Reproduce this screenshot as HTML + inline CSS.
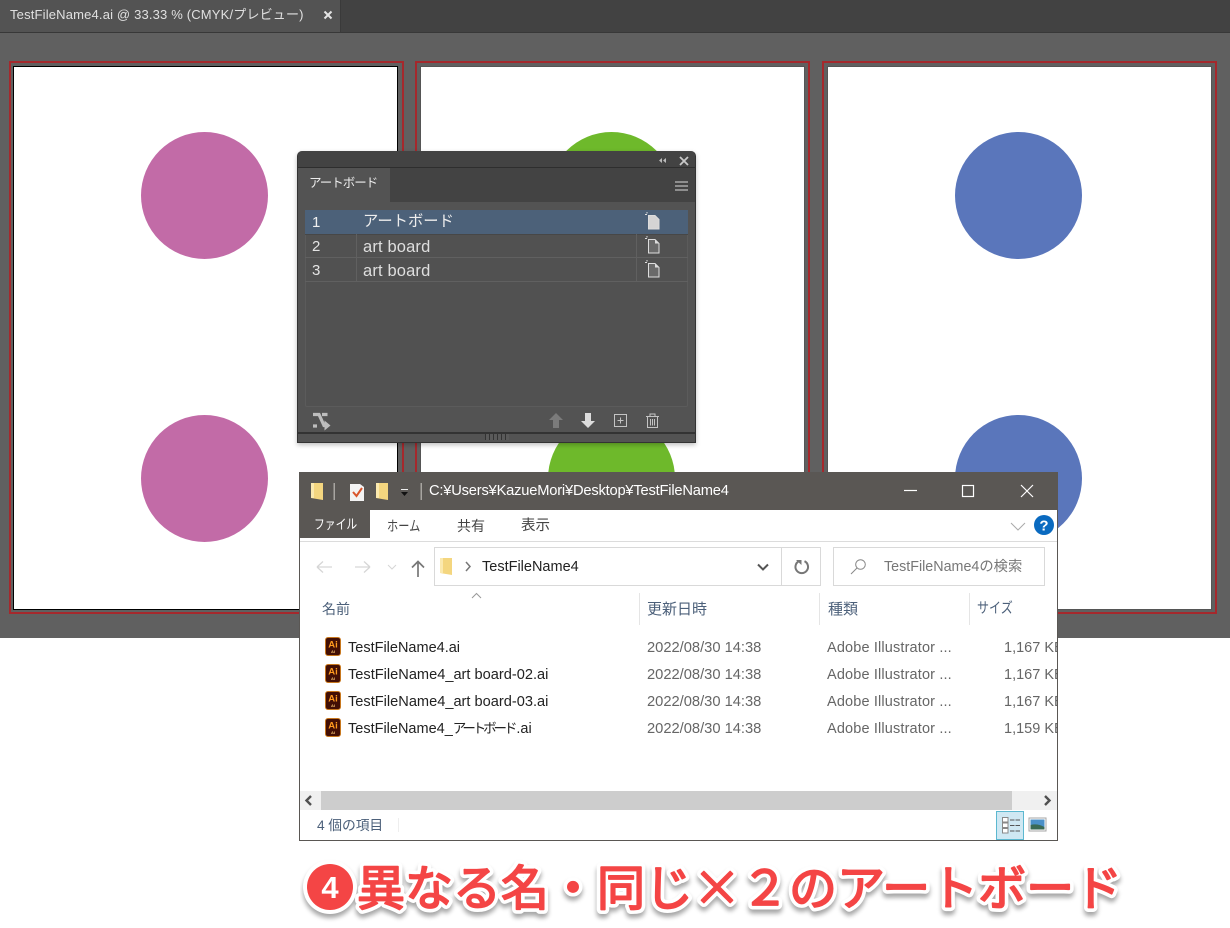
<!DOCTYPE html>
<html lang="ja"><head><meta charset="utf-8"><title>TestFileName4</title>
<style>
html,body{margin:0;padding:0;background:#fff}
body{width:1230px;height:928px;position:relative;overflow:hidden;font-family:"Liberation Sans","Noto Sans CJK JP",sans-serif}
.a{position:absolute;box-sizing:border-box}
.t{position:absolute;white-space:nowrap;line-height:1}
.c{position:absolute;width:127px;height:127px;border-radius:50%}
.red{position:absolute;border:2px solid #a5282c;box-sizing:border-box}
.ab{position:absolute;background:#fff;box-sizing:border-box}
.sx{transform:scaleX(.8);transform-origin:0 0}
svg{position:absolute;overflow:visible}
</style></head><body>
<div class="a" style="left:0;top:0;width:1230px;height:638px;background:#606060"></div>
<div class="a" style="left:0;top:0;width:1230px;height:33px;background:#424242;border-bottom:1px solid #383838"></div>
<div class="a" style="left:0;top:0;width:341px;height:33px;background:#535353;border-right:1px solid #3a3a3a;border-bottom:1px solid #383838"></div>
<div class="t" style="left:10px;top:8px;font-size:13px;color:#e0e0e0;letter-spacing:.17px">TestFileName4.ai @ 33.33 % (CMYK/プレビュー)</div>
<svg style="left:323px;top:10px" width="10" height="10"><path d="M1.500 1.500L8.500 8.500M8.500 1.500L1.500 8.500" stroke="#e4e4e4" stroke-width="2"/></svg>

<div class="red" style="left:9px;top:61px;width:395px;height:553px"></div>
<div class="red" style="left:415px;top:61px;width:395px;height:553px"></div>
<div class="red" style="left:822px;top:61px;width:395px;height:553px"></div>
<div class="ab" style="left:13px;top:66px;width:385px;height:544px;border:1px solid #000"></div>
<div class="ab" style="left:420px;top:66px;width:385px;height:544px;border:1px solid #555"></div>
<div class="ab" style="left:827px;top:66px;width:385px;height:544px;border:1px solid #555"></div>
<div class="c" style="left:141px;top:132px;background:#c26ba7"></div>
<div class="c" style="left:141px;top:415px;background:#c26ba7"></div>
<div class="c" style="left:548px;top:132px;background:#6eb92b"></div>
<div class="c" style="left:548px;top:415px;background:#6eb92b"></div>
<div class="c" style="left:955px;top:132px;background:#5a76bb"></div>
<div class="c" style="left:955px;top:415px;background:#5a76bb"></div>

<!-- Artboards panel -->
<div class="a" style="left:297px;top:151px;width:399px;height:292px;background:#535353;border:1px solid #333;border-top:0;border-radius:5px 5px 0 0;box-shadow:0 2px 5px rgba(0,0,0,.25)"></div>
<div class="a" style="left:298px;top:151px;width:397px;height:17px;background:#434343;border-radius:5px 5px 0 0;border-bottom:1px solid #2e2e2e"></div>
<svg style="left:658px;top:156px" width="32" height="10"><path d="M4 2L1 4.500L4 7ZM8 2L5 4.500L8 7Z" fill="#bbb"/><path d="M22 1L30 9M30 1L22 9" stroke="#c8c8c8" stroke-width="1.800"/></svg>
<div class="a" style="left:298px;top:168px;width:397px;height:34px;background:#434343"></div>
<div class="a" style="left:298px;top:168px;width:92px;height:35px;background:#535353"></div>
<div class="t" style="left:309px;top:177px;font-size:12.500px;color:#ececec;letter-spacing:-1px">アートボード</div>
<div class="a" style="left:675px;top:181px;width:13px;height:10px;border-top:2px solid #8e8e8e;border-bottom:2px solid #8e8e8e"></div>
<div class="a" style="left:675px;top:185px;width:13px;height:2px;background:#8e8e8e"></div>
<div class="a" style="left:305px;top:210px;width:383px;height:197px;background:#515151;border:1px solid #5b5b5b;border-radius:2px"></div>
<div class="a" style="left:305px;top:210px;width:383px;height:24px;background:#4c6179"></div>
<div class="a" style="left:305px;top:234px;width:383px;height:1px;background:#474747"></div>
<div class="a" style="left:305px;top:257px;width:383px;height:1px;background:#606060"></div>
<div class="a" style="left:305px;top:281px;width:383px;height:1px;background:#606060"></div>
<div class="a" style="left:356px;top:234px;width:1px;height:47px;background:#606060"></div>
<div class="a" style="left:636px;top:234px;width:1px;height:47px;background:#606060"></div>
<div class="t" style="left:312px;top:215px;font-size:15px;color:#f0f0f0">1</div>
<div class="t" style="left:312px;top:239px;font-size:15px;color:#e4e4e4">2</div>
<div class="t" style="left:312px;top:263px;font-size:15px;color:#e4e4e4">3</div>
<div class="t" style="left:363px;top:214px;font-size:15.300px;color:#ededed">アートボード</div>
<div class="t" style="left:363px;top:239px;font-size:16.500px;color:#dedede;letter-spacing:.15px">art board</div>
<div class="t" style="left:363px;top:263px;font-size:16.500px;color:#dedede;letter-spacing:.15px">art board</div>
<svg style="left:643px;top:212px" width="18" height="70">
<path d="M5.500 3.500H12L16 7.500V17H5.500Z" fill="#d4d4d4" stroke="#ddd"/><path d="M2 2.500H4M4 0V1.500" stroke="#ddd"/>
<g transform="translate(0,24)"><path d="M5.500 3.500H12L16 7.500V17H5.500Z" fill="#6a6a6a" stroke="#ddd"/><path d="M12 3.500V7.500H16Z" fill="#ddd"/><path d="M2 2.500H4M4 0V1.500" stroke="#ddd"/></g>
<g transform="translate(0,48)"><path d="M5.500 3.500H12L16 7.500V17H5.500Z" fill="#6a6a6a" stroke="#ddd"/><path d="M12 3.500V7.500H16Z" fill="#ddd"/><path d="M2 2.500H4M4 0V1.500" stroke="#ddd"/></g>
</svg>
<svg style="left:312px;top:412px" width="20" height="20" fill="none"><path d="M1 2.500H7L12 13.500H14M1 14H5M10 2.500H15.500" stroke="#bdbdbd" stroke-width="3.200"/><path d="M12.500 8.500L18.500 13.500L12.500 18.500Z" fill="#bdbdbd"/></svg>
<svg style="left:548px;top:412px" width="116" height="18">
<path d="M8 1L15 8H11V16H5V8H1Z" fill="#7b7b7b"/>
<path d="M37 1H43V9H47L40 16L33 9H37Z" fill="#dcdcdc"/>
<rect x="66.500" y="2.500" width="12" height="12" fill="none" stroke="#c4c4c4"/><path d="M72.500 5.500V11.500M69.500 8.500H75.500" stroke="#c4c4c4"/>
<path d="M98 4.500H111M102 4V2H107V4M99.500 5V15.500H109.500V5M102.500 7V13.500M104.500 7V13.500M106.500 7V13.500" fill="none" stroke="#c4c4c4"/>
</svg>
<div class="a" style="left:298px;top:432px;width:397px;height:2px;background:#333"></div>
<div class="a" style="left:485px;top:434px;width:24px;height:6px;background:repeating-linear-gradient(90deg,#333 0 1px,#5a5a5a 1px 4px)"></div>

<!-- Explorer -->
<div class="a" style="left:299px;top:472px;width:759px;height:369px;background:#fff;border:1px solid #5a5754"></div>
<div class="a" style="left:299px;top:472px;width:759px;height:38px;background:#5a5754"></div>
<div class="a" style="left:300px;top:510px;width:70px;height:28px;background:#5a5754"></div>
<svg style="left:309px;top:481px" width="115" height="22">
<path d="M2 2H14V19L2 17Z" fill="#f4d67f"/><path d="M2 2H5V17L2 17Z" fill="#fbe9ae"/>
<rect x="24.500" y="2" width="1.500" height="17" fill="#a8a5a1"/>
<path d="M41 3H51L55 6V20H41Z" fill="#f3f3f3"/><path d="M44 11L47.500 15L53 7" fill="none" stroke="#d9552b" stroke-width="2"/>
<path d="M67 2H79V19L67 17Z" fill="#f4d67f"/><path d="M67 2H70V17L67 17Z" fill="#fbe9ae"/>
<path d="M92 8.500H99" stroke="#eee" stroke-width="1"/><path d="M92 11H99L95.500 15Z" fill="#111"/>
<rect x="111.500" y="2" width="1.500" height="17" fill="#a8a5a1"/>
</svg>
<div class="t" style="left:429px;top:484px;font-size:14.700px;color:#fff;letter-spacing:-.2px">C:¥Users¥KazueMori¥Desktop¥TestFileName4</div>
<svg style="left:900px;top:482px" width="140" height="18" fill="none" stroke="#fff" stroke-width="1.200"><path d="M4 8.500H17"/><rect x="62.500" y="3.500" width="11" height="11"/><path d="M121 3L133 15M133 3L121 15"/></svg>
<div class="t sx" style="left:314px;top:518px;font-size:13.500px;color:#fff">ファイル</div>
<div class="t sx" style="left:387px;top:519px;font-size:14px;color:#444">ホーム</div>
<div class="t" style="left:457px;top:519px;font-size:14px;color:#444">共有</div>
<div class="t" style="left:521px;top:519px;font-size:14.500px;color:#444">表示</div>
<svg style="left:1010px;top:518px" width="46" height="22"><path d="M1 5L8 12L15 5" fill="none" stroke="#aaa"/><circle cx="34" cy="7" r="10" fill="#0a6ac0"/><text x="34" y="12.500" font-size="15" font-weight="700" fill="#fff" text-anchor="middle" font-family="Liberation Sans">?</text></svg>
<div class="a" style="left:300px;top:541px;width:757px;height:1px;background:#dcdcdc"></div>
<svg style="left:314px;top:556px" width="112" height="22" fill="none"><path d="M3 11H18M3 11L9 5.500M3 11L9 16.500" stroke="#d6d6d6" stroke-width="1.300"/><path d="M41 11H56M56 11L50 5.500M56 11L50 16.500" stroke="#d6d6d6" stroke-width="1.300"/><path d="M74 9L78 13L82 9" stroke="#d6d6d6"/><path d="M104 21V6M98 11.500L104 5.500L110 11.500" stroke="#777" stroke-width="1.700"/></svg>
<div class="a" style="left:434px;top:547px;width:387px;height:39px;border:1px solid #d9d9d9"></div>
<div class="a" style="left:781px;top:547px;width:1px;height:39px;background:#d9d9d9"></div>
<svg style="left:439px;top:557px" width="36" height="20"><path d="M1 1H13V18L1 16Z" fill="#f4d67f"/><path d="M1 1H4V16L1 16Z" fill="#fbe9ae"/><path d="M27 5L31 9.500L27 14" fill="none" stroke="#777" stroke-width="1.500"/></svg>
<div class="t" style="left:482px;top:560px;font-size:14.500px;color:#222">TestFileName4</div>
<svg style="left:755px;top:558px" width="60" height="20" fill="none"><path d="M3 6.500L8 11.500L13 6.500" stroke="#555" stroke-width="2"/><path d="M44 3.200A6.300 6.300 0 1 0 49.500 3.200" stroke="#777" stroke-width="2"/><path d="M41 2H46.500V7Z" fill="#777"/></svg>
<div class="a" style="left:833px;top:547px;width:212px;height:39px;border:1px solid #d9d9d9"></div>
<svg style="left:850px;top:558px" width="18" height="18" fill="none" stroke="#888"><circle cx="10.500" cy="6.500" r="4.800"/><path d="M7 10L1 16"/></svg>
<div class="t" style="left:884px;top:560px;font-size:14.300px;color:#777">TestFileName4の検索</div>

<svg style="left:471px;top:592px" width="12" height="8"><path d="M1 6L5.500 1.500L10 6" fill="none" stroke="#999"/></svg>
<div class="a" style="left:639px;top:593px;width:1px;height:32px;background:#e5e5e5"></div>
<div class="a" style="left:819px;top:593px;width:1px;height:32px;background:#e5e5e5"></div>
<div class="a" style="left:969px;top:593px;width:1px;height:32px;background:#e5e5e5"></div>
<div class="t" style="left:322px;top:602px;font-size:14px;color:#4c607a">名前</div>
<div class="t" style="left:647px;top:602px;font-size:15px;color:#4c607a">更新日時</div>
<div class="t" style="left:828px;top:602px;font-size:15px;color:#4c607a">種類</div>
<div class="t" style="left:977px;top:602px;font-size:14.500px;color:#4c607a;transform:scaleX(.83);transform-origin:0 0">サイズ</div>

<svg style="left:325px;top:637px" width="16" height="102" font-family="Liberation Sans" font-weight="700">
<g><rect x=".5" y=".5" width="15" height="18" rx="2.500" fill="#430f04" stroke="#c8781e"/><text x="8" y="10.500" font-size="9.500" fill="#ff9a1f" text-anchor="middle">Ai</text><text x="8" y="16" font-size="4" fill="#f4c070" text-anchor="middle">AI</text></g>
<g transform="translate(0,27)"><rect x=".5" y=".5" width="15" height="18" rx="2.500" fill="#430f04" stroke="#c8781e"/><text x="8" y="10.500" font-size="9.500" fill="#ff9a1f" text-anchor="middle">Ai</text><text x="8" y="16" font-size="4" fill="#f4c070" text-anchor="middle">AI</text></g>
<g transform="translate(0,54)"><rect x=".5" y=".5" width="15" height="18" rx="2.500" fill="#430f04" stroke="#c8781e"/><text x="8" y="10.500" font-size="9.500" fill="#ff9a1f" text-anchor="middle">Ai</text><text x="8" y="16" font-size="4" fill="#f4c070" text-anchor="middle">AI</text></g>
<g transform="translate(0,81)"><rect x=".5" y=".5" width="15" height="18" rx="2.500" fill="#430f04" stroke="#c8781e"/><text x="8" y="10.500" font-size="9.500" fill="#ff9a1f" text-anchor="middle">Ai</text><text x="8" y="16" font-size="4" fill="#f4c070" text-anchor="middle">AI</text></g>
</svg>
<div class="t" style="left:348px;top:641px;font-size:14.500px;color:#222">TestFileName4.ai</div>
<div class="t" style="left:348px;top:668px;font-size:14.600px;color:#222">TestFileName4_art board-02.ai</div>
<div class="t" style="left:348px;top:695px;font-size:14.600px;color:#222">TestFileName4_art board-03.ai</div>
<div class="t" style="left:348px;top:722px;font-size:14.500px;color:#222">TestFileName4_<span style="font-size:13.500px;letter-spacing:-3.100px">アートボード</span><span style="margin-left:2px">.ai</span></div>
<div class="t" style="left:647px;top:641px;font-size:14.700px;color:#666">2022/08/30 14:38</div>
<div class="t" style="left:647px;top:668px;font-size:14.700px;color:#666">2022/08/30 14:38</div>
<div class="t" style="left:647px;top:695px;font-size:14.700px;color:#666">2022/08/30 14:38</div>
<div class="t" style="left:647px;top:722px;font-size:14.700px;color:#666">2022/08/30 14:38</div>
<div class="t" style="left:827px;top:641px;font-size:14.500px;color:#666;letter-spacing:.15px">Adobe Illustrator ...</div>
<div class="t" style="left:827px;top:668px;font-size:14.500px;color:#666;letter-spacing:.15px">Adobe Illustrator ...</div>
<div class="t" style="left:827px;top:695px;font-size:14.500px;color:#666;letter-spacing:.15px">Adobe Illustrator ...</div>
<div class="t" style="left:827px;top:722px;font-size:14.500px;color:#666;letter-spacing:.15px">Adobe Illustrator ...</div>
<div class="a" style="left:970px;top:636px;width:87px;height:104px;overflow:hidden">
<div class="t" style="left:34px;top:5px;font-size:14.500px;color:#666">1,167 KB</div>
<div class="t" style="left:34px;top:32px;font-size:14.500px;color:#666">1,167 KB</div>
<div class="t" style="left:34px;top:59px;font-size:14.500px;color:#666">1,167 KB</div>
<div class="t" style="left:34px;top:86px;font-size:14.500px;color:#666">1,159 KB</div>
</div>

<div class="a" style="left:300px;top:791px;width:757px;height:19px;background:#f0f0f0"></div>
<div class="a" style="left:321px;top:791px;width:691px;height:19px;background:#cdcdcd"></div>
<svg style="left:300px;top:791px" width="757" height="19" fill="none" stroke="#505050" stroke-width="2.400"><path d="M11 5L6.500 9.500L11 14M745 5L749.500 9.500L745 14"/></svg>
<div class="t" style="left:317px;top:819px;font-size:13.800px;color:#4c607a;letter-spacing:-.1px">4 個の項目</div>
<div class="a" style="left:398px;top:818px;width:1px;height:14px;background:#eee"></div>
<div class="a" style="left:996px;top:811px;width:28px;height:29px;background:#cfe8f3;border:1px solid #5cb8d0"></div>
<svg style="left:1002px;top:817px" width="48" height="18"><rect x=".5" y=".5" width="5.500" height="4.500" fill="#fff" stroke="#888"/><rect x=".5" y="6" width="5.500" height="4.500" fill="#fff" stroke="#888"/><rect x=".5" y="11.500" width="5.500" height="4.500" fill="#fff" stroke="#888"/><path d="M8 3H18M8 8.500H18M8 14H18" stroke="#555" stroke-dasharray="4.500 1"/>
<rect x="27" y="1" width="17" height="13" fill="#fff" stroke="#a5a5a5"/><rect x="28.500" y="2.500" width="14" height="10" fill="#4a90c8"/><path d="M28.500 8Q35 6 42.500 10V12.500H28.500Z" fill="#3a6a55"/></svg>

<!-- Caption -->
<svg style="left:0;top:850px" width="1230" height="78" font-family="'Noto Sans CJK JP',sans-serif">
<defs><filter id="s" x="-5%" y="-30%" width="110%" height="170%"><feGaussianBlur stdDeviation="2.500"/></filter></defs>
<circle cx="330" cy="41" r="27" fill="#000" opacity=".35" filter="url(#s)"/>
<text x="357" y="55" font-size="48" fill="#000" stroke="#000" stroke-width="9" stroke-linejoin="round" opacity=".35" filter="url(#s)" transform="translate(0,4)">異なる名・同じ×２のアートボード</text>
<circle cx="330" cy="37" r="27" fill="#fff"/>
<circle cx="330" cy="37" r="23" fill="#f44545"/>
<text x="330" y="48" font-size="31" font-weight="700" fill="#fff" text-anchor="middle" font-family="Liberation Sans">4</text>
<text x="357" y="55" font-size="48" fill="#fff" stroke="#fff" stroke-width="9" stroke-linejoin="round">異なる名・同じ×２のアートボード</text>
<text x="357" y="55" font-size="48" fill="#f44545" stroke="#f44545" stroke-width="1.800" stroke-linejoin="round">異なる名・同じ×２のアートボード</text>
</svg>
</body></html>
